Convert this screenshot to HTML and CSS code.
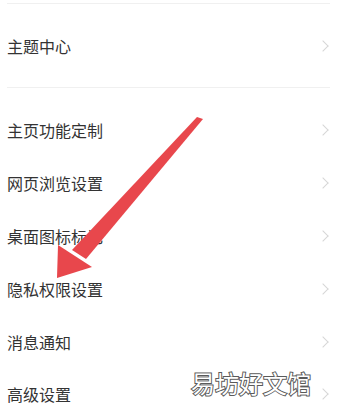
FILE: index.html
```html
<!DOCTYPE html>
<html lang="zh">
<head>
<meta charset="utf-8">
<link rel="stylesheet" href="styles.css">
</head>
<body>
<div class="page">
  <div class="divider first"></div>
  <div class="row tall"><span class="label">主题中心</span><span class="chev"></span></div>
  <div class="divider"></div>
  <div class="list">
    <div class="row"><span class="label">主页功能定制</span><span class="chev"></span></div>
    <div class="row"><span class="label">网页浏览设置</span><span class="chev"></span></div>
    <div class="row"><span class="label">桌面图标标记</span><span class="chev"></span></div>
    <div class="row"><span class="label">隐私权限设置</span><span class="chev"></span></div>
    <div class="row"><span class="label">消息通知</span><span class="chev"></span></div>
    <div class="row"><span class="label">高级设置</span><span class="chev"></span></div>
  </div>
  <svg class="arrow" width="338" height="414" viewBox="0 0 338 414">
    <polygon points="197,117 203,119 86,259 72,250" fill="#e8474c"/>
    <polygon points="57,278 58,245 92,267" fill="#e8474c"/>
  </svg>
  <div class="watermark">易坊好文馆</div>
</div>
</body>
</html>
```
FILE: styles.css
```css
html, body {
  margin: 0;
  padding: 0;
  background: #fff;
}
.page {
  position: relative;
  width: 338px;
  height: 414px;
  overflow: hidden;
  font-family: "Noto Sans CJK SC", "Noto Sans", sans-serif;
}
.divider {
  height: 1px;
  background: #f0f0f0;
  margin: 0 8px 0 7px;
}
.divider.first {
  margin-top: 3px;
}
.row {
  height: 52.8px;
  display: flex;
  align-items: center;
  justify-content: space-between;
  padding: 0 11px 0 7px;
}
.row.tall {
  height: 83px;
}
.list {
  padding-top: 16px;
}
.label {
  font-size: 16px;
  line-height: 1;
  color: #333;
}
.chev {
  width: 7px;
  height: 7px;
  border-top: 1.2px solid #d6d6d6;
  border-right: 1.2px solid #d6d6d6;
  transform: rotate(45deg);
}
.arrow {
  position: absolute;
  left: 0;
  top: 0;
}
.watermark {
  position: absolute;
  left: 191px;
  top: 365px;
  font-size: 24px;
  color: #fff;
  -webkit-text-stroke: 2px #5a5a5a;
  paint-order: stroke fill;
  font-family: "Noto Sans CJK SC", sans-serif;
  font-weight: 400;
}
```
